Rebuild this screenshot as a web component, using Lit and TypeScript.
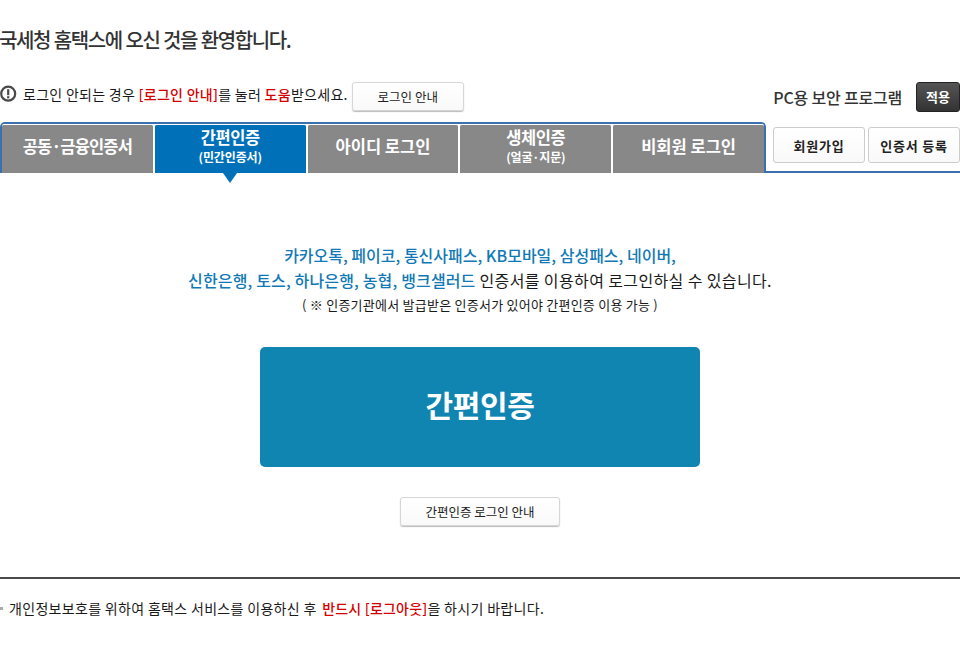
import { LitElement, html, css } from "lit";
import { customElement } from "lit/decorators.js";

@customElement("app-root")
export class AppRoot extends LitElement {
  static styles = css`
    :host {
      display: block;
      width: 960px;
      height: 647px;
      overflow: hidden;
      background: #fff;
      color: #222;
      font-family: "Noto Sans CJK KR", "Noto Sans", sans-serif;
      font-size: 13px;
    }
    * { box-sizing: border-box; }
    .title {
      margin: 0 0 0 -1px;
      padding-top: 26px;
      height: 82px;
      font-size: 20px;
      line-height: 28px;
      font-weight: 500;
      letter-spacing: -1.4px;
      word-spacing: 0.6px;
      color: #333;
      white-space: nowrap;
    }
    .top {
      display: flex;
      justify-content: space-between;
      height: 40px;
    }
    .notice { display: flex; align-items: flex-start; }
    .notice-text {
      margin: 3px 0 0 5px;
      line-height: 18px;
      font-size: 14px;
      letter-spacing: 0.28px;
      color: #1a1a1a;
      white-space: nowrap;
    }
    .red { color: #d40000; }
    .notice-text .red { font-weight: 500; }
    .alert { display: block; margin-top: 3px; }
    .btn {
      display: flex;
      align-items: center;
      justify-content: center;
      background: linear-gradient(#fff, #f9f9f9);
      border: 1px solid #d6d6d6;
      border-radius: 3px;
      box-shadow: 0 1px 1px #bbb;
      font-size: 12.5px;
      color: #222;
      white-space: nowrap;
    }
    .guide { width: 112px; height: 29px; margin-left: 4px; padding-bottom: 1px; }
    .sec { display: flex; align-items: flex-start; }
    .sec-label {
      margin-top: 4px;
      font-size: 16px;
      line-height: 22px;
      font-weight: 500;
      color: #333;
      letter-spacing: -0.2px;
      white-space: nowrap;
    }
    .apply {
      width: 44px;
      height: 30px;
      margin-left: 14px;
      padding-bottom: 2px;
      display: flex;
      align-items: center;
      justify-content: center;
      background: linear-gradient(#555, #333);
      border: 1px solid #222;
      border-radius: 3px;
      color: #fff;
      font-size: 13px;
      font-weight: 700;
    }
    .tabrow { display: flex; height: 51px; }
    .tabs {
      width: 766px;
      height: 51px;
      display: flex;
      gap: 2px;
      border: 2px solid #3a6fb0;
      border-bottom: 0;
      border-radius: 5px 5px 0 0;
      flex: none;
      background: #fff;
    }
    .tab {
      position: relative;
      flex: 1 1 0;
      display: flex;
      flex-direction: column;
      align-items: center;
      justify-content: center;
      padding-bottom: 6px;
      background: #888;
      color: #fff;
      border-top: 1px solid #fff;
      border-radius: 2px 2px 0 0;
      font-size: 16.5px;
      font-weight: 700;
      line-height: 20px;
      white-space: nowrap;
    }
    .tab.tight { letter-spacing: -0.85px; }
    .tab.two { letter-spacing: -0.4px; }
    .tab small { font-size: 12px; line-height: 19px; font-weight: 700; letter-spacing: -0.15px; }
    .tab.on { background: #0071b9; }
    .tab.on::after {
      content: "";
      position: absolute;
      left: 50%;
      bottom: -10px;
      margin-left: -7px;
      border-left: 7px solid transparent;
      border-right: 7px solid transparent;
      border-top: 10px solid #0071b9;
    }
    .side {
      flex: 1;
      border-bottom: 2px solid #3a6fb0;
      display: flex;
      gap: 3px;
      padding: 5px 0 0 7px;
      height: 51px;
    }
    .side .btn {
      width: 92px;
      height: 36px;
      font-size: 13px;
      font-weight: 700;
      box-shadow: none;
      border-color: #ccc;
      letter-spacing: 0.8px;
    }
    .body { display: flex; flex-direction: column; align-items: center; }
    .l1, .l2 {
      font-size: 16px;
      white-space: nowrap;
      color: #1a1a1a;
    }
    .l1 { margin-top: 70px; line-height: 25px; letter-spacing: 0; }
    .l2 { line-height: 24px; letter-spacing: 0.38px; }
    .blue { color: #1179b5; font-weight: 500; }
    .l2 .blue { letter-spacing: 0.15px; }
    .l3 { margin-top: 3px; font-size: 13px; line-height: 20px; letter-spacing: 0.24px; white-space: nowrap; color: #1a1a1a; }
    .main {
      margin-top: 32px;
      width: 440px;
      height: 120px;
      padding-bottom: 6px;
      background: #1185b2;
      border-radius: 5px;
      color: #fff;
      display: flex;
      align-items: center;
      justify-content: center;
      font-size: 30px;
      font-weight: 700;
      letter-spacing: -0.3px;
    }
    .guide2 { width: 160px; height: 29px; margin-top: 30px; }
    .foot {
      margin-top: 51px;
      border-top: 2px solid #4a4a4a;
      padding: 19px 0 0 0;
      display: flex;
      align-items: center;
      font-size: 14px;
      line-height: 20px;
      letter-spacing: 0.32px;
      color: #1a1a1a;
      white-space: nowrap;
    }
    .foot .red { margin-left: 2px; font-weight: 500; letter-spacing: 0.2px; }
    .sq { width: 3px; height: 3px; background: #aaa; margin-right: 6px; }
  `;

  render() {
    return html`
      <h1 class="title">국세청 홈택스에 오신 것을 환영합니다.</h1>
      <div class="top">
        <div class="notice">
          <svg class="alert" width="18" height="18" viewBox="0 0 18 18">
            <circle cx="8.2" cy="8.7" r="7" fill="none" stroke="#4a4a4a" stroke-width="2.2"></circle>
            <rect x="7.1" y="4.2" width="2.2" height="6" fill="#4a4a4a"></rect>
            <rect x="7.1" y="11.2" width="2.2" height="2.2" fill="#4a4a4a"></rect>
          </svg>
          <span class="notice-text">로그인 안되는 경우 <span class="red">[로그인 안내]</span>를 눌러 <span class="red">도움</span>받으세요.</span>
          <div class="btn guide">로그인 안내</div>
        </div>
        <div class="sec">
          <span class="sec-label">PC용 보안 프로그램</span>
          <div class="apply">적용</div>
        </div>
      </div>
      <div class="tabrow">
        <div class="tabs">
          <div class="tab tight">공동·금융인증서</div>
          <div class="tab two on">간편인증<small>(민간인증서)</small></div>
          <div class="tab">아이디 로그인</div>
          <div class="tab two">생체인증<small>(얼굴·지문)</small></div>
          <div class="tab">비회원 로그인</div>
        </div>
        <div class="side">
          <div class="btn">회원가입</div>
          <div class="btn">인증서 등록</div>
        </div>
      </div>
      <div class="body">
        <div class="l1"><span class="blue">카카오톡, 페이코, 통신사패스, KB모바일, 삼성패스, 네이버,</span></div>
        <div class="l2"><span class="blue">신한은행, 토스, 하나은행, 농협, 뱅크샐러드</span> 인증서를 이용하여 로그인하실 수 있습니다.</div>
        <div class="l3">( ※ 인증기관에서 발급받은 인증서가 있어야 간편인증 이용 가능 )</div>
        <div class="main">간편인증</div>
        <div class="btn guide2">간편인증 로그인 안내</div>
      </div>
      <div class="foot"><span class="sq"></span>개인정보보호를 위하여 홈택스 서비스를 이용하신 후&nbsp;<span class="red">반드시 [로그아웃]</span>을 하시기 바랍니다.</div>
    `;
  }
}
